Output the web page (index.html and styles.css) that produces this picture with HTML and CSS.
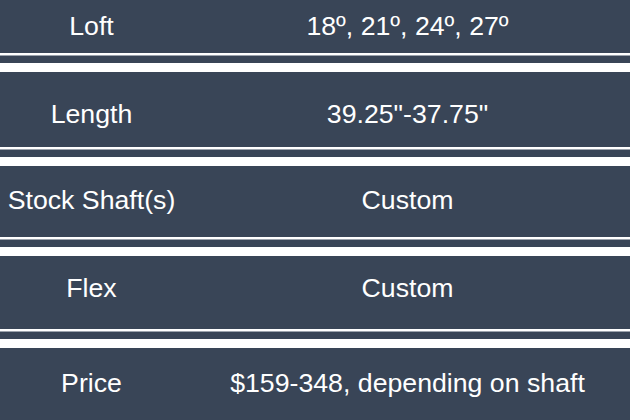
FILE: index.html
```html
<!DOCTYPE html>
<html lang="en">
<head>
<meta charset="utf-8">
<title>Specs</title>
<link rel="stylesheet" href="styles.css">
</head>
<body>
<div class="spec">
  <div class="row row-1"><div class="cell">Loft</div><div class="cell">18º, 21º, 24º, 27º</div></div>
  <div class="sep"></div>
  <div class="row row-2"><div class="cell">Length</div><div class="cell">39.25"-37.75"</div></div>
  <div class="sep"></div>
  <div class="row row-3"><div class="cell">Stock Shaft(s)</div><div class="cell">Custom</div></div>
  <div class="sep"></div>
  <div class="row row-4"><div class="cell">Flex</div><div class="cell">Custom</div></div>
  <div class="sep"></div>
  <div class="row row-5"><div class="cell">Price</div><div class="cell">$159-348, depending on shaft</div></div>
</div>
</body>
</html>
```
FILE: styles.css
```css
html, body {
  margin: 0;
  padding: 0;
  background: #394557;
  overflow: hidden;
}
.spec {
  display: flex;
  flex-direction: column;
  font-family: "Liberation Sans", Arial, sans-serif;
  font-size: 26.7px;
  line-height: 30px;
  color: #ffffff;
}
.row {
  display: grid;
  grid-template-columns: 183px 1fr;
  background: #394557;
  box-sizing: border-box;
}
.cell {
  text-align: center;
  white-space: nowrap;
}
.cell + .cell {
  padding-left: 2px;
}
.row-1 { height: 53px; padding-top: 11px; }
.row-2 { height: 75px; padding-top: 27px; }
.row-3 { height: 71px; padding-top: 19px; }
.row-4 { height: 73px; padding-top: 17px; }
.row-5 { height: 80px; padding-top: 20px; }
.sep {
  height: 19px;
  box-sizing: border-box;
  border-top: 2px solid #ffffff;
  background: linear-gradient(to bottom, #9ca3ad 0, #9ca3ad 1px, #394557 1px, #394557 8px, #ffffff 8px);
}
```
